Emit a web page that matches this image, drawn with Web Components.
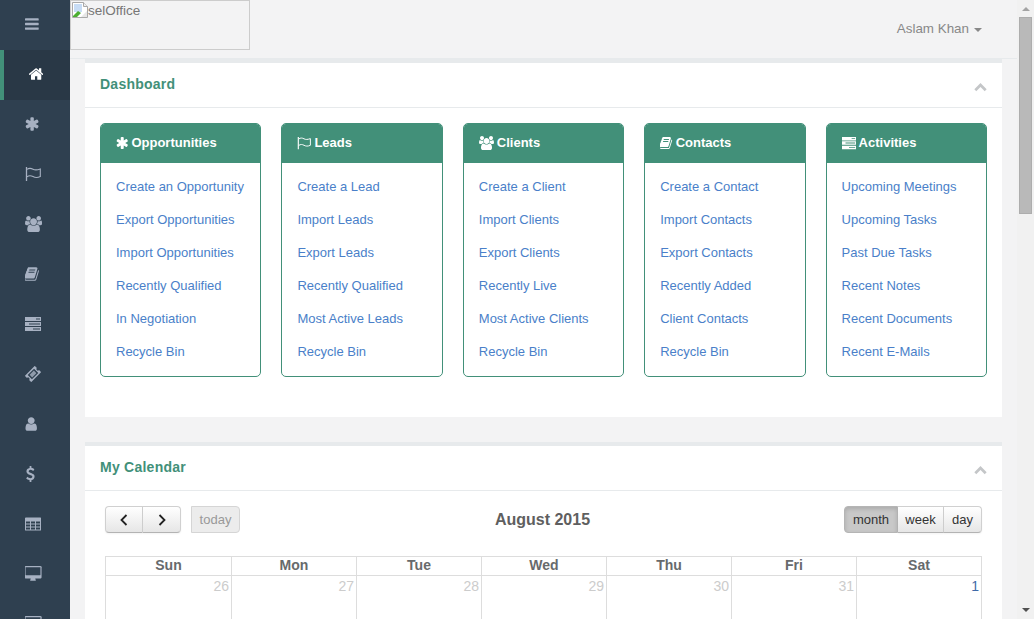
<!DOCTYPE html>
<html>
<head>
<meta charset="utf-8">
<title>Dashboard</title>
<style>
html, body { margin: 0; height: 100%; overflow: hidden; }
body { font: 14px "Liberation Sans", Arial, sans-serif; color: #676a6c; background: #f3f3f4; }
</style>
</head>
<body>

<app-shell>
    <side-nav slot="nav">
        <nav-item icon="bars"></nav-item>
        <nav-item icon="home" active></nav-item>
        <nav-item icon="asterisk"></nav-item>
        <nav-item icon="flag"></nav-item>
        <nav-item icon="users"></nav-item>
        <nav-item icon="book"></nav-item>
        <nav-item icon="tasks"></nav-item>
        <nav-item icon="ticket"></nav-item>
        <nav-item icon="user"></nav-item>
        <nav-item icon="dollar"></nav-item>
        <nav-item icon="table"></nav-item>
        <nav-item icon="desktop"></nav-item>
        <nav-item icon="desktop"></nav-item>
    </side-nav>

    <top-bar user="Aslam Khan" logo="selOffice"></top-bar>

    <i-box heading="Dashboard">
        <div style="display:grid;grid-template-columns:repeat(5,1fr);gap:20px;padding:15px 15px 40px">
            <menu-card heading="Opportunities" icon="asterisk">
                <a>Create an Opportunity</a><a>Export Opportunities</a><a>Import Opportunities</a>
                <a>Recently Qualified</a><a>In Negotiation</a><a>Recycle Bin</a>
            </menu-card>
            <menu-card heading="Leads" icon="flag">
                <a>Create a Lead</a><a>Import Leads</a><a>Export Leads</a>
                <a>Recently Qualified</a><a>Most Active Leads</a><a>Recycle Bin</a>
            </menu-card>
            <menu-card heading="Clients" icon="users">
                <a>Create a Client</a><a>Import Clients</a><a>Export Clients</a>
                <a>Recently Live</a><a>Most Active Clients</a><a>Recycle Bin</a>
            </menu-card>
            <menu-card heading="Contacts" icon="book">
                <a>Create a Contact</a><a>Import Contacts</a><a>Export Contacts</a>
                <a>Recently Added</a><a>Client Contacts</a><a>Recycle Bin</a>
            </menu-card>
            <menu-card heading="Activities" icon="tasks">
                <a>Upcoming Meetings</a><a>Upcoming Tasks</a><a>Past Due Tasks</a>
                <a>Recent Notes</a><a>Recent Documents</a><a>Recent E-Mails</a>
            </menu-card>
        </div>
    </i-box>

    <i-box heading="My Calendar">
        <full-calendar title="August 2015"></full-calendar>
    </i-box>
</app-shell>

<script>
(function () {

    // paths are in font-awesome's 1792 em, vb is cropped to the glyph so it sits flush left
    const ICONS = {
        bars: { vb: '128 0 1536 1792', d: 'M1664 1344v128q0 26-19 45t-45 19h-1408q-26 0-45-19t-19-45v-128q0-26 19-45t45-19h1408q26 0 45 19t19 45zm0-512v128q0 26-19 45t-45 19h-1408q-26 0-45-19t-19-45v-128q0-26 19-45t45-19h1408q26 0 45 19t19 45zm0-512v128q0 26-19 45t-45 19h-1408q-26 0-45-19t-19-45v-128q0-26 19-45t45-19h1408q26 0 45 19t19 45z' },
        home: { vb: '97 0 1600 1792', d: 'M1472 992v480q0 26-19 45t-45 19h-384v-384h-256v384h-384q-26 0-45-19t-19-45v-480q0-1 .5-3t.5-3l575-474 575 474q1 2 1 6zm223-69l-62 74q-8 9-21 11h-3q-13 0-21-7l-692-577-692 577q-12 8-24 7-13-2-21-11l-62-74q-8-10-7-23.500t11-21.500l719-599q32-26 76-26t76 26l244 204v-195q0-14 9-23t23-9h192q14 0 23 9t9 23v408l219 182q10 8 11 21.500t-7 23.500z' },
        asterisk: { vb: '100 0 1590 1792', d: 'M1546 1050q46 26 59.500 77.500t-12.500 97.500l-64 110q-26 46-77.500 59.500t-97.500-12.500l-266-153v307q0 52-38 90t-90 38h-128q-52 0-90-38t-38-90v-307l-266 153q-46 26-97.500 12.500t-77.500-59.500l-64-110q-26-46-12.500-97.500t59.500-77.500l266-154-266-154q-46-26-59.500-77.500t12.500-97.500l64-110q26-46 77.500-59.500t97.500 12.500l266 153v-307q0-52 38-90t90-38h128q52 0 90 38t38 90v307l266-153q46-26 97.500-12.500t77.500 59.500l64 110q26 46 12.500 97.500t-59.500 77.500l-266 154z' },
        flag: { vb: '0 0 16 16', raw: '<path d="M1.500 1v14" stroke="currentColor" stroke-width="1.300" fill="none"/><path d="M2 3.400c2-1.500 4-1.300 6-.2s4 1 7.300-.2v7.600c-3 1.400-5.300 1.100-7.300 0s-4-1.300-6 .2" stroke="currentColor" stroke-width="1.100" fill="none"/>' },
        users: { vb: '0 0 1920 1792', d: 'M593 896q-162 5-265 128h-134q-82 0-138-40.500t-56-118.500q0-353 124-353 6 0 43.500 21t97.500 42.500 119 21.500q67 0 133-23-5 37-5 66 0 139 81 256zm1071 637q0 120-73 189.500t-194 69.500h-874q-121 0-194-69.500t-73-189.500q0-53 3.500-103.500t14-109 26.500-108.500 43-97.500 62-81 85.500-53.500 111.500-20q10 0 43 21.500t73 48 107 48 135 21.500 135-21.500 107-48 73-48 43-21.500q61 0 111.500 20t85.500 53.500 62 81 43 97.500 26.500 108.500 14 109 3.500 103.500zm-1024-1277q0 106-75 181t-181 75-181-75-75-181 75-181 181-75 181 75 75 181zm704 384q0 159-112.500 271.500t-271.500 112.500-271.500-112.500-112.500-271.500 112.500-271.500 271.500-112.500 271.500 112.500 112.500 271.500zm576 225q0 78-56 118.500t-138 40.500h-134q-103-123-265-128 81-117 81-256 0-29-5-66 66 23 133 23 59 0 119-21.500t97.500-42.500 43.500-21q124 0 124 353zm-128-609q0 106-75 181t-181 75-181-75-75-181 75-181 181-75 181 75 75 181z' },
        book: { vb: '110 0 1600 1792', d: 'M1639 478q40 57 18 129l-275 906q-19 64-76.500 107.500t-122.500 43.500h-923q-77 0-148.500-53.500t-99.500-131.500q-24-67-2-127 0-4 3-27t4-37q1-8-3-21.500t-3-19.500q2-11 8-21t16.500-23.500 16.500-23.500q23-38 45-91.500t30-91.500q3-10 .5-30t-.5-28q3-11 17-28t17-23q21-36 42-92t25-90q1-9-2.500-32t.5-28q4-13 22-30.500t22-22.500q19-26 42.500-84.500t27.500-96.500q1-8-3-25.500t-2-26.500q2-8 9-18t18-23 17-21q8-12 16.500-30.500t15-35 16-36 19.500-32 26.500-23.500 36-11.500 47.500 5.500l-1 3q38-9 51-9h761q74 0 114 56t18 130l-274 906q-36 119-71.500 153.500t-128.500 34.500h-869q-27 0-38 15-11 16-1 43 24 70 144 70h923q29 0 56-15.500t35-41.500l300-987q7-22 5-57 38 15 59 43zm-1064 2q-4 13 2 22.500t20 9.500h608q13 0 25.500-9.500t16.500-22.500l21-64q4-13-2-22.500t-20-9.500h-608q-13 0-25.500 9.500t-16.500 22.500zm-83 256q-4 13 2 22.500t20 9.500h608q13 0 25.500-9.500t16.500-22.500l21-64q4-13-2-22.500t-20-9.500h-608q-13 0-25.500 9.500t-16.500 22.500z' },
        tasks: { vb: '0 0 16 16', raw: '<path fill="currentColor" fill-rule="evenodd" d="M0 1h16v4H0zM11 2.500v1h4v-1zM0 6h16v4H0zM4 7.500v1h11v-1zM0 11h16v4H0zM8 12.500v1h7v-1z"/>' },
        ticket: { vb: '0 0 16 16', raw: '<g transform="rotate(-45 8 8)"><path fill="currentColor" fill-rule="evenodd" d="M1 3.500h14v3a1.500 1.500 0 0 0 0 3v3H1v-3a1.500 1.500 0 0 0 0-3zM3.500 5v6h9V5z"/><path fill="currentColor" opacity=".8" d="M5 6.200h6v3.600H5z"/></g>' },
        user: { vb: '200 0 1392 1792', d: 'M1536 1399q0 109-62.500 187t-150.500 78h-854q-88 0-150.500-78t-62.500-187q0-85 8.500-160.500t31.500-152 58.500-131 94-89 134.500-34.500q131 128 313 128t313-128q76 0 134.500 34.500t94 89 58.500 131 31.500 152 8.500 160.500zm-256-887q0 159-112.500 271.500t-271.500 112.500-271.500-112.500-112.500-271.500 112.500-271.500 271.500-112.500 271.500 112.500 112.500 271.500z' },
        dollar: { vb: '288 0 1088 1792', d: 'M1362 1185q0 153-99.500 263.500t-258.500 136.500v175q0 14-9 23t-23 9h-135q-13 0-22.500-9.500t-9.500-22.500v-175q-66-9-127.500-31t-101.500-44.500-74-48-46.500-37.500-17.500-18q-17-21-2-41l103-135q7-10 23-12 15-2 24 9l2 2q113 99 243 125 37 8 74 8 81 0 142.500-43t61.500-122q0-28-15-53t-33.500-42-58.500-37.500-66-32-80-32.500q-39-16-61.500-25t-61.500-26.500-62.500-31-56.500-35.500-53.500-42.500-43.500-49-35.500-58-21-66.500-8.500-78q0-138 98-242t255-134v-180q0-13 9.500-22.500t22.500-9.500h135q14 0 23 9t9 23v176q57 6 110.500 23t87 33.500 63.500 37.500 39 29 15 14q17 18 5 38l-81 146q-8 15-23 16-14 3-27-7-3-3-14.500-12t-39-26.500-58.500-32-74.500-26-85.500-11.500q-95 0-155 43t-60 111q0 26 8.500 48t29.500 41.500 39.500 33 56 31 60.500 27 70 27.500q53 20 81 31.500t76 35 75.500 42.500 62 50 53 63.500 31.500 76.500 13 94z' },
        table: { vb: '0 0 16 16', raw: '<path fill="currentColor" fill-rule="evenodd" d="M1 1.500h14.500q.5 0 .5.500v12q0 .5-.5.500H.5Q0 14.500 0 14V2q0-.5 1-.5zM1 5.500v2h4v-2zM6 5.500v2h4v-2zM11 5.500v2h4v-2zM1 8.500v2h4v-2zM6 8.500v2h4v-2zM11 8.500v2h4v-2zM1 11.500v2h4v-2zM6 11.500v2h4v-2zM11 11.500v2h4v-2z"/>' },
        desktop: { vb: '0 0 1920 1792', d: 'M1728 992v-832q0-13-9.500-22.500t-22.500-9.500h-1600q-13 0-22.500 9.500t-9.500 22.500v832q0 13 9.500 22.500t22.500 9.500h1600q13 0 22.500-9.500t9.500-22.500zm128-832v1088q0 66-47 113t-113 47h-544q0 37 16 77.500t32 71 16 43.500q0 26-19 45t-45 19h-512q-26 0-45-19t-19-45q0-14 16-44t32-70 16-78h-544q-66 0-113-47t-47-113v-1088q0-66 47-113t113-47h1632q66 0 113 47t47 113z' }
    };

    customElements.define('fa-icon', class extends HTMLElement {
        connectedCallback() {
            const icon = ICONS[this.getAttribute('name')];
            const size = parseFloat(this.getAttribute('size') || 16);
            const vb = icon.vb.split(' ');
            const w = size * vb[2] / vb[3];
            const body = icon.raw || `<path fill="currentColor" d="${icon.d}"/>`;
            this.attachShadow({ mode: 'open' }).innerHTML = `
            <style>
            :host { display: inline-flex; flex: none; }
            svg { display: block; }
            </style>
            <svg width="${w}" height="${size}" viewBox="${icon.vb}">${body}</svg>`;
        }
    });

    customElements.define('app-shell', class extends HTMLElement {
        constructor() {
            super();
            this.attachShadow({ mode: 'open' }).innerHTML = `
            <style>
            :host { display: flex; height: 100vh; overflow: hidden; }
            .main { flex: 1; min-width: 0; overflow: hidden; }
            .bar { flex: none; width: 17px; background: #f1f1f1; display: flex; flex-direction: column; align-items: center; justify-content: space-between; position: relative; }
            .thumb { position: absolute; left: 2px; right: 2px; top: 17px; height: 197px; background: #b9b9b9; border: 1px solid #adadad; box-sizing: border-box; }
            .up, .down { width: 0; height: 0; border: 4px solid transparent; }
            .up { border-bottom: 4px solid #a3a3a3; margin-top: 3px; }
            .down { border-top: 4px solid #505050; margin-bottom: 3px; }
            </style>
            <slot name="nav"></slot>
            <div class="main"><slot></slot></div>
            <div class="bar"><div class="up"></div><div class="thumb"></div><div class="down"></div></div>`;
        }
    });

    customElements.define('side-nav', class extends HTMLElement {
        constructor() {
            super();
            this.attachShadow({ mode: 'open' }).innerHTML = `
            <style>
            :host { display: block; flex: none; width: 70px; background: #2f4050; overflow: hidden; }
            </style>
            <slot></slot>`;
        }
    });

    customElements.define('nav-item', class extends HTMLElement {
        connectedCallback() {
            this.attachShadow({ mode: 'open' }).innerHTML = `
            <style>
            :host { display: flex; align-items: center; height: 50px; padding: 0 0 2px 25px; box-sizing: border-box; color: #a7b1c2; }
            :host([active]) { background: #293846; border-left: 4px solid #429079; color: #fff; }
            </style>
            <fa-icon name="${this.getAttribute('icon')}" size="16"></fa-icon>`;
        }
    });

    customElements.define('top-bar', class extends HTMLElement {
        connectedCallback() {
            this.attachShadow({ mode: 'open' }).innerHTML = `
            <style>
            :host { display: flex; justify-content: space-between; height: 59px; box-sizing: border-box; border-bottom: 1px solid #e7eaec; }
            .logo { width: 180px; height: 50px; box-sizing: border-box; border: 1px solid #ccc; color: #777; display: flex; align-items: flex-start; padding: 1px; line-height: 17px; font-size: 13.500px; }
            .logo svg { flex: none; }
            .user { color: #888; padding: 20px 35px 0 0; line-height: 17px; display: flex; font-size: 13.400px; }
            .caret { width: 0; height: 0; margin: 8px 0 0 5px; border: 4px solid transparent; border-top-color: #888; border-bottom: 0; }
            </style>
            <div class="logo">
                <svg width="16" height="16" viewBox="0 0 16 16">
                    <path d="M.5.500h11l4 4v11H.5z" fill="#fff" stroke="#a9a9a9"/>
                    <path d="M11.500.500v4h4" fill="#eee" stroke="#a9a9a9"/>
                    <path d="M2 2h8v8H2z" fill="#c7dcf5"/>
                    <path d="M1 14l5-5 3 2-4 4H1z" fill="#4caf32"/>
                    <path d="M9 15l6-6v6z" fill="#e6e6e6"/>
                </svg><span>${this.getAttribute('logo')}</span>
            </div>
            <div class="user"><span>${this.getAttribute('user')}</span><span class="caret"></span></div>`;
        }
    });

    customElements.define('i-box', class extends HTMLElement {
        connectedCallback() {
            this.attachShadow({ mode: 'open' }).innerHTML = `
            <style>
            :host { display: block; margin: 0 15px 25px; background: #fff; border-top: 4px solid #e7eaec; }
            .head { height: 45px; box-sizing: border-box; border-bottom: 1px solid #e7eaec; display: flex; align-items: center; justify-content: space-between; padding: 0 15px 3px; font-weight: bold; color: #429079; letter-spacing: .25px; }
            .head svg { display: block; margin-top: 7px; }
            </style>
            <div class="head">
                <span>${this.getAttribute('heading')}</span>
                <svg width="13" height="9" viewBox="0 0 13 9"><path d="M1.300 7.200L6.500 2l5.200 5.200" fill="none" stroke="#c4c6c8" stroke-width="2.700"/></svg>
            </div>
            <slot></slot>`;
        }
    });

    customElements.define('menu-card', class extends HTMLElement {
        connectedCallback() {
            this.attachShadow({ mode: 'open' }).innerHTML = `
            <style>
            :host { display: block; border: 1px solid #429079; border-radius: 5px; overflow: hidden; height: 254px; box-sizing: border-box; }
            .head { height: 39px; box-sizing: border-box; padding: 0 15px 2px; background: #429079; color: #fff; font-weight: bold; font-size: 13px; display: flex; align-items: center; gap: 3px; }
            .links { display: flex; flex-direction: column; padding: 15px 15px 0; }
            ::slotted(a) { display: block; height: 33px; line-height: 17px; font-size: 13px; color: #4a7fc9; cursor: pointer; white-space: nowrap; }
            </style>
            <div class="head"><fa-icon name="${this.getAttribute('icon')}" size="14"></fa-icon><span>${this.getAttribute('heading')}</span></div>
            <div class="links"><slot></slot></div>`;
        }
    });

    customElements.define('full-calendar', class extends HTMLElement {
        connectedCallback() {
            const names = ['Sun', 'Mon', 'Tue', 'Wed', 'Thu', 'Fri', 'Sat'];
            const days = [26, 27, 28, 29, 30, 31, 1];
            this.attachShadow({ mode: 'open' }).innerHTML = `
            <style>
            :host { display: block; padding: 15px 20px 0; }
            .bar { display: flex; align-items: center; justify-content: space-between; height: 27px; margin-bottom: 23px; position: relative; }
            .left, .group { display: flex; }
            .left { gap: 10px; }
            button { font: inherit; font-size: 13px; height: 27px; box-sizing: border-box; padding: 0; color: #333; background: linear-gradient(#fff, #e6e6e6); border: 1px solid #d0d0d0; border-bottom-color: #b3b3b3; border-left-width: 0; box-shadow: inset 0 1px 0 rgba(255,255,255,.2), 0 1px 2px rgba(0,0,0,.05); display: flex; align-items: center; justify-content: center; }
            button:first-child { border-left-width: 1px; border-radius: 4px 0 0 4px; }
            button:last-child { border-radius: 0 4px 4px 0; }
            .nav { width: 38px; }
            .today { border: 1px solid #d5d5d5; border-radius: 4px; background: #ececec; color: #999; width: 49px; box-shadow: none; }
            .on { background: #c8c8c8; border-color: #b5b5b5; box-shadow: inset 0 2px 4px rgba(0,0,0,.15); }
            h2 { position: absolute; left: 0; right: 2px; margin: 0; text-align: center; font-size: 16px; font-weight: bold; color: #5f5f5f; pointer-events: none; }
            table { border-collapse: collapse; table-layout: fixed; width: 877px; }
            th, td { border: 1px solid #ddd; padding: 0; }
            th { height: 18px; line-height: 16px; vertical-align: top; font-weight: bold; color: #676a6c; }
            th:first-child { width: 125px; }
            td { height: 100px; vertical-align: top; text-align: right; padding: 2px 2px 0 0; line-height: 17px; color: #ccc; }
            td.cur { color: #3f6aa8; }
            </style>
            <div class="bar">
                <div class="left">
                    <div class="group">
                        <button class="nav"><svg width="10" height="14" viewBox="0 0 10 14"><path d="M7.500 2L2.500 7l5 5" fill="none" stroke="#222" stroke-width="1.800"/></svg></button>
                        <button class="nav"><svg width="10" height="14" viewBox="0 0 10 14"><path d="M2.500 2l5 5-5 5" fill="none" stroke="#222" stroke-width="1.800"/></svg></button>
                    </div>
                    <button class="today">today</button>
                </div>
                <h2>${this.getAttribute('title')}</h2>
                <div class="group">
                    <button class="on" style="width:54px">month</button>
                    <button style="width:46px">week</button>
                    <button style="width:38px">day</button>
                </div>
            </div>
            <table>
                <tr>${names.map(n => `<th>${n}</th>`).join('')}</tr>
                <tr>${days.map(d => `<td class="${d === 1 ? 'cur' : ''}">${d}</td>`).join('')}</tr>
            </table>`;
        }
    });

}());
</script>
</body>
</html>
